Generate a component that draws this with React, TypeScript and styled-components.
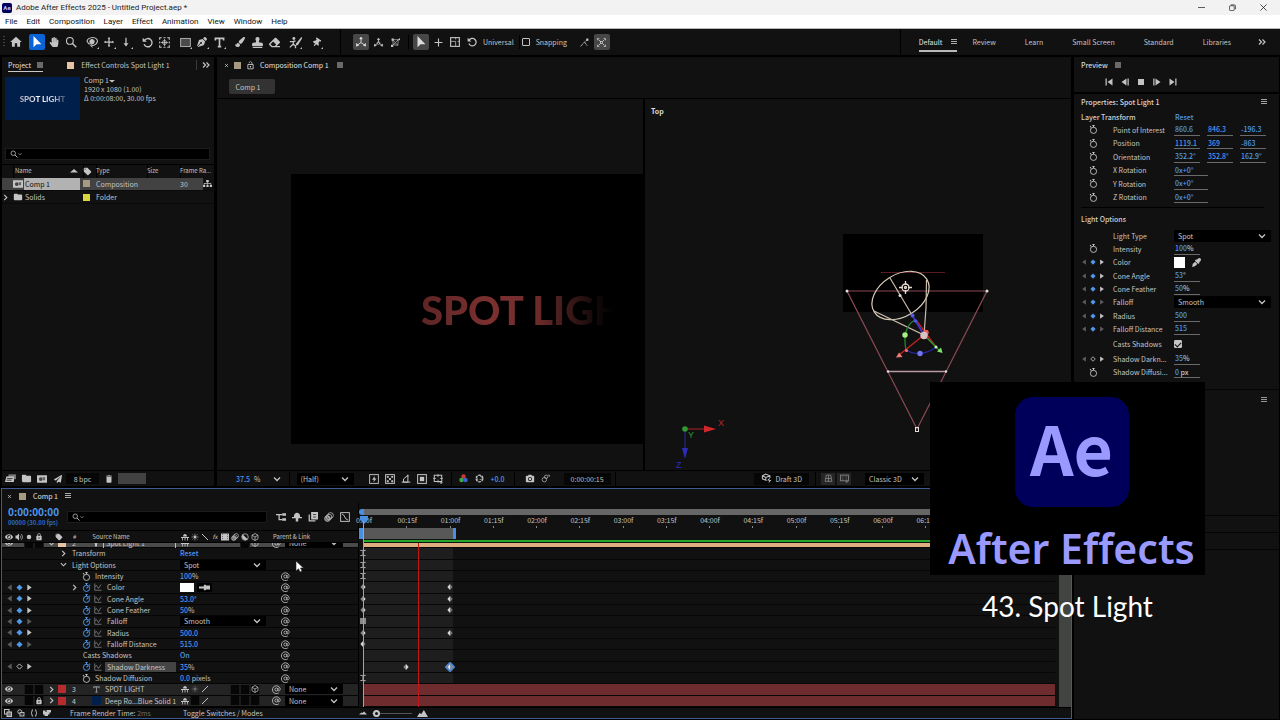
import React from "react";
import styled, { createGlobalStyle, css } from "styled-components";
import { FaHandPaper, FaStamp, FaEraser, FaPenNib, FaPaintBrush, FaThumbtack, FaEyeDropper, FaEye, FaSitemap, FaPaperPlane } from "react-icons/fa";
import { MdHome, MdLocalOffer, MdFolder, MdLock, MdLockOpen, MdDelete, MdPhotoCamera } from "react-icons/md";

const ui = '"Noto Sans CJK SC", "Noto Sans", sans-serif';
const c = {
  panel: "#111111",
  text: "#c4c4c4",
  dim: "#6f6f6f",
  blue: "#4f98ec",
  deepBlue: "#2d6bc0",
  edge: "#3d5a91",
  sand: "#a89a80",
  peach: "#e5c3a3",
  red: "#b52b2e",
};

const GlobalStyle = createGlobalStyle`
  * { box-sizing: border-box; }
  body { margin: 0; background: #000; }
  button, input, select { font: inherit; color: inherit; margin: 0; padding: 0; border: 0; background: none; }
  button { display: flex; align-items: center; justify-content: center; }
  svg { display: block; flex: none; }
`;

const Page = styled.div`
  position: relative;
  display: flex;
  flex-direction: column;
  min-height: 100vh;
  overflow: hidden;
  background: #000;
  color: ${c.text};
  font-family: ${ui};
  font-size: 7px;
  line-height: 10px;
  white-space: nowrap;
`;

/* ---------- icons ---------- */

const glyphs: Record<string, React.ReactNode> = {
  arrow: <path d="M4 1v13l3.6-3.3H13z" fill="currentColor" stroke="none" />,
  search: <><circle cx="6.500" cy="6.500" r="4.500" strokeWidth="1.500" /><path d="M10 10l5 5" strokeWidth="1.800" /></>,
  orbit: <><path d="M2 8c-2-3 3-6 7-6s7 3 6 6-5 5-8 5M2 8c1 2 2 3 4 3" strokeWidth="1.500" /><circle cx="8" cy="7.500" r="3" fill="currentColor" /><path d="M9 10l-3 3 3 2" /></>,
  pan: <><path d="M8 1v14M1 8h14" strokeWidth="2" /><path d="M8 0l2 3H6zM8 16l2-3H6zM0 8l3-2v4zM16 8l-3-2v4z" fill="currentColor" stroke="none" /></>,
  plus: <path d="M8 1v14M1 8h14" strokeWidth="2" />,
  dolly: <><path d="M8 1v12" strokeWidth="2" /><path d="M4 10l4 5 4-5z" fill="currentColor" stroke="none" /></>,
  rotate: <><path d="M3.500 5A6 6 0 1 1 3 10.500" strokeWidth="2" /><path d="M1 1v6h6z" fill="currentColor" stroke="none" /></>,
  anchor: <><path d="M1 4V1h3M12 1h3v3M15 12v3h-3M4 15H1v-3M6.500 1h3M6.500 15h3M1 6.500v3M15 6.500v3" strokeWidth="1.600" /><circle cx="8" cy="8" r="3" /><path d="M8 3v10M3 8h10" /></>,
  rect: <rect x="1" y="2" width="14" height="12" fill="#4a4a4a" />,
  type: <path d="M2 5V2h12v3M8 2v12M5.500 14h5" strokeWidth="2.400" />,
  roto: <><circle cx="6" cy="3" r="1.800" fill="currentColor" stroke="none" /><path d="M1 7h4l3-1M6 6l-1 4-4 4M5 10l3 2v3" strokeWidth="1.600" /><path d="M15.500 1L9 9l-1 3 3-1 5-8z" fill="currentColor" stroke="none" /></>,
  axis: <><path d="M8 9V2M8 9l-6 4M8 9l6 4" strokeWidth="1.500" /><path d="M8 0l2 3H6zM0 14.500l1-4 3 3zM16 14.500l-1-4-3 3z" fill="currentColor" /></>,
  axisWorld: <><path d="M8 8V2M8 8l-6 5M8 8l6 5" strokeWidth="1.500" /><path d="M8 0l2 3H6zM0 14.500l1-4 3 3zM16 14.500l-1-4-3 3z" fill="currentColor" /><circle cx="8" cy="9" r="2.500" /></>,
  axisView: <><path d="M3 3h10l-1 10-8-1zM3 3l9 10M13 3L2 14" /><path d="M1 1h4v4H1zM0 12h4v4H0z" fill="currentColor" stroke="none" /><path d="M12 3l4-3v4z" fill="currentColor" stroke="none" /></>,
  scaleBox: <><rect x="1" y="1" width="14" height="14" strokeWidth="1.800" /><path d="M1 7h8v8M9 1v3M12 7h3" /></>,
  snapLine: <><path d="M1 15l7-8 5-4M8 7l5 7" strokeWidth="1.500" strokeDasharray="6 1" /><rect x="11" y="1" width="4" height="4" fill="currentColor" stroke="none" /></>,
  snapBox: <><path d="M1 4V1h3M12 1h3v3M15 12v3h-3M4 15H1v-3M3 3l3 3M13 3l-3 3M3 13l3-3M13 13l-3-3" strokeWidth="1.400" /><rect x="6" y="6" width="4" height="4" /></>,
  menu: <path d="M0 1.333h16M0 6.667h16M0 12h16" strokeWidth="2" />,
  block: <rect x="0" y="0" width="16" height="16" fill="#6a6a6a" stroke="none" />,
  more: <path d="M2 3l5 5-5 5M9 3l5 5-5 5" strokeWidth="2.400" />,
  chevron: <path d="M2 5l6 6 6-6" strokeWidth="2.600" />,
  twirl: <path d="M5 2l6 6-6 6" strokeWidth="2.600" />,
  close: <path d="M3 3l10 10M13 3L3 13" strokeWidth="2" />,
  watch: <><circle cx="8" cy="9.500" r="5.500" strokeWidth="1.600" /><path d="M6 1h4M8 1v3M2 2l2 2.500" strokeWidth="1.800" /></>,
  watchOn: <><circle cx="8" cy="9.500" r="5.500" strokeWidth="1.700" /><path d="M6 1h4M8 1v3M8 9.500l3-3M13 3l1.500 2" strokeWidth="1.800" /></>,
  graph: <><path d="M1.500 1v13.500H15" strokeWidth="1.500" /><path d="M2 7l3-2 4 6 5-8" strokeWidth="1.500" /></>,
  spiral: <><path d="M12 14A7 7 0 1 1 14.500 6.500c.3 2.500-1 4-2.500 4-1.200 0-1.800-1-1.500-2.500L11 5" strokeWidth="1.500" /><circle cx="7.800" cy="8" r="2.700" strokeWidth="1.500" /></>,
  prev: <path d="M13 1v14L3 8z" fill="currentColor" stroke="none" />,
  next: <path d="M3 1v14l10-7z" fill="currentColor" stroke="none" />,
  key: <path d="M8 1l7 7-7 7-7-7z" fill="currentColor" stroke="none" />,
  keyOff: <path d="M8 2l6 6-6 6-6-6z" strokeWidth="2.200" />,
  first: <path d="M1 1h2.500v14H1zM15 1v14L5 8z" fill="currentColor" stroke="none" />,
  last: <path d="M15 1h-2.500v14H15zM1 1v14l10-7z" fill="currentColor" stroke="none" />,
  stepBack: <path d="M13 1h2.500v14H13zM11 1v14L1 8z" fill="currentColor" stroke="none" />,
  stepFwd: <path d="M3 1H.5v14H3zM5 1v14l10-7z" fill="currentColor" stroke="none" />,
  stop: <rect x="2" y="2" width="12" height="12" fill="currentColor" stroke="none" />,
  speaker: <><path d="M1 5h3l4-4v14l-4-4H1z" fill="currentColor" stroke="none" /><path d="M10 5c2 2 2 4 0 6M12 2c4 4 4 8 0 12" strokeWidth="1.500" /></>,
  dot: <circle cx="8" cy="8" r="4.500" fill="currentColor" stroke="none" />,
  shy: <><path d="M4 7c0-7 8-7 8 0zM0 8h16v2H0z" fill="currentColor" stroke="none" /><path d="M3 10v5M8 8v7M13 10v5" strokeWidth="1.600" /></>,
  shyMan: <><path d="M3 8c0-9 10-9 10 0z" fill="currentColor" stroke="none" /><path d="M0 8h16v2H0zM6 10h4v5H6z" fill="currentColor" stroke="none" /></>,
  sun: <><circle cx="8" cy="8" r="2.500" fill="currentColor" /><path d="M8 1v3M8 12v3M1 8h3M12 8h3M3 3l2 2M11 11l2 2M13 3l-2 2M3 13l2-2" /></>,
  slash: <path d="M2 2l12 12" strokeWidth="2" />,
  pencil: <path d="M2 14L14 2" strokeWidth="2" />,
  frames: <><rect x="0" y="1" width="16" height="14" fill="currentColor" stroke="none" /><path d="M3 2v12M13 2v12" stroke="#333" strokeDasharray="2 2" /></>,
  blur: <><circle cx="10.500" cy="5.500" r="4.500" /><circle cx="8" cy="8" r="4.500" /><circle cx="5.500" cy="10.500" r="4.500" fill="currentColor" fillOpacity=".5" /></>,
  half: <><circle cx="8" cy="8" r="6.500" strokeWidth="1.500" /><path d="M3.500 3.500a6.500 6.500 0 0 0 9 9z" fill="currentColor" /></>,
  cube: <path d="M8 1l6 3.500v7L8 15l-6-3.500v-7zM2 4.500L8 8l6-3.500M8 8v7" strokeWidth="1.500" />,
  draft: <><path d="M8 11l-6-2.500V4l5-2.500L13 4v3M2 4l5 2.500L13 4M7 6.500V11" strokeWidth="1.500" /><path d="M13 6l-4 5h3l-1 4 4-5h-3z" fill="currentColor" stroke="none" /></>,
  flow: <><path d="M0 4h10M5 4v8h5" strokeWidth="2" /><path d="M10 2h6v4h-6zM10 10h6v4h-6z" fill="currentColor" stroke="none" /></>,
  stack: <><rect x="5" y="0" width="11" height="12" fill="currentColor" stroke="none" /><path d="M2 4v10h10" strokeWidth="2" /><path d="M8 4h5M8 8h5" stroke="#222" /></>,
  graphBox: <><rect x="1" y="1" width="14" height="14" strokeWidth="1.500" /><path d="M3 3c5 1 4 9 10 10" strokeWidth="1.500" /></>,
  interpret: <><rect x="5" y="2" width="11" height="7" fill="#777" stroke="none" /><path d="M2 5h11v8H0l2-8z" fill="currentColor" stroke="none" /><path d="M3 8h8M2.500 10.500h7" stroke="#222" /></>,
  newComp: <><rect x="0" y="2" width="16" height="12" fill="currentColor" stroke="none" /><circle cx="6" cy="8" r="3" fill="#444" stroke="none" /><rect x="9" y="5" width="4" height="5" fill="#666" stroke="none" /></>,
  fast: <><rect x="1" y="1" width="14" height="14" strokeWidth="1.500" /><path d="M9 3l-4 6h3l-1 4 5-6H9z" fill="currentColor" stroke="none" /></>,
  grid: <><rect x="1" y="1" width="14" height="14" strokeWidth="1.600" /><path d="M3 3h3v3H3zM10 3h3v3h-3zM6.500 6.500h3v3h-3zM3 10h3v3H3zM10 10h3v3h-3z" fill="currentColor" stroke="none" /></>,
  mask: <path d="M4 13V8l7-6v11zM1 13h14M11 1v3" strokeWidth="1.600" />,
  region: <><rect x="1" y="1" width="14" height="14" strokeWidth="1.600" /><rect x="4.500" y="4.500" width="7" height="7" fill="currentColor" stroke="none" /></>,
  guides: <><rect x="2" y="2" width="12" height="10" strokeWidth="1.600" /><path d="M8 0v5M8 9v5M0 7h5M11 7h5" /><path d="M10 13h6l-3 3z" fill="currentColor" stroke="none" /></>,
  viewer: <><rect x="1" y="2" width="14" height="10" strokeWidth="1.600" /><path d="M5 4v6M11 4v6" strokeDasharray="2 2" strokeWidth="1.500" /><path d="M9 13h6l-3 3z" fill="currentColor" stroke="none" /></>,
  channels: <><circle cx="8" cy="4.500" r="4" fill="#c43a3a" stroke="none" /><circle cx="4.500" cy="10.500" r="4" fill="#3aa845" stroke="none" /><circle cx="11.500" cy="10.500" r="4" fill="#3f62d0" stroke="none" /></>,
  aperture: <><circle cx="8" cy="8" r="6" strokeWidth="2.200" strokeDasharray="5 1.300" /><path d="M8 2l4 5M14 9l-6 1M3 5l2 6" /></>,
  ghost: <><circle cx="6" cy="10" r="4" /><circle cx="9" cy="5" r="3" /><path d="M12 2h3v3" /></>,
  ground: <path d="M4 2h8l2 11H2zM3 8h10M8 2v11" strokeWidth="1.500" />,
  toggleA: <><rect x="1" y="1" width="9" height="9" strokeWidth="2" /><rect x="6" y="6" width="9" height="9" fill="#777" strokeWidth="2" /></>,
  toggleB: <><circle cx="5.500" cy="5.500" r="4" strokeWidth="1.800" /><rect x="6" y="7" width="8" height="7" fill="#333" strokeWidth="1.800" /></>,
  braces: <path d="M6 1C3 1 5 7 2 8c3 1 1 7 4 7M10 1c3 0 1 6 4 7-3 1-1 7-4 7" strokeWidth="2" />,
  render: <path d="M0 3h5v3h2V2h9v5h-3v4h-3v3H3v-3H0z" fill="currentColor" stroke="none" />,
  dropper: <><path d="M0 8h8" strokeWidth="3" /><path d="M7 4h3v8H7zM10 5h6v6h-6z" fill="currentColor" stroke="none" /></>,
  hills: <path d="M0 13l4-6 2 2 4-6 6 10z" fill="currentColor" stroke="none" />,
  hill: <path d="M0 11l5-4 2 1 3-3 6 6z" fill="currentColor" stroke="none" />,
  sort: <path d="M0 11l8-7 8 7z" fill="currentColor" stroke="none" />,
  caret: <path d="M0 5h16l-8 7z" fill="currentColor" stroke="none" />,
  bulb: <><circle cx="8" cy="6" r="4" fill="currentColor" stroke="none" /><path d="M8 10v5" strokeWidth="4" /></>,
  min: <path d="M0 8h16" strokeWidth="1.600" />,
  restore: <><rect x="1" y="4" width="11" height="11" rx="2" strokeWidth="1.600" /><path d="M4 2h8c2 0 3 1 3 3v7" strokeWidth="1.600" /></>,
  x: <path d="M1 1l14 14M15 1L1 15" strokeWidth="1.800" />,
  ibeam: <path d="M2 2h5l1 1 1-1h5M2 14h5l1-1 1 1h5M8 3v10" strokeWidth="2.200" />,
  hold: <rect x="1" y="1" width="14" height="14" fill="#8a8a8a" stroke="none" />,
  kf: <><path d="M8 0l7 8-7 8z" fill="#777" stroke="none" /><path d="M8 0L1 8l7 8z" fill="#d8d8d8" stroke="none" /></>,
  kfR: <><path d="M8 0l7 8-7 8z" fill="#d8d8d8" stroke="none" /><path d="M8 0L1 8l7 8z" fill="#8a8a8a" stroke="none" /></>,
  ring: <><path d="M8 1.500l6.500 6.500L8 14.500 1.500 8z" fill="#7d8fa8" stroke="#4a86cf" strokeWidth="2" strokeLinejoin="round" /><path d="M8 4L5 8l3 4z" fill="#eee" stroke="none" /></>,
};

function Icon({ name, size = 9, color }: { name: string; size?: number; color?: string }) {
  return (
    <svg width={size} height={size} viewBox="0 0 16 16" fill="none" stroke="currentColor" strokeWidth="1.200" color={color} aria-hidden="true">
      {glyphs[name]}
    </svg>
  );
}

/* ---------- shared controls ---------- */

const Spacer = styled.div`flex: 1;`;

const Swatch = styled.i<{ $color: string; $size?: number }>`
  display: block;
  flex: none;
  width: ${(p) => p.$size ?? 7}px;
  height: ${(p) => p.$size ?? 7}px;
  background: ${(p) => p.$color};
`;

const SelectBox = styled.label<{ $width: number; $height?: number }>`
  position: relative;
  flex: none;
  display: flex;
  align-items: center;
  width: ${(p) => p.$width}px;
  height: ${(p) => p.$height ?? 10}px;
  background: #000;
  border-radius: 1px;
  select {
    appearance: none;
    width: 100%;
    height: 100%;
    padding-left: 4px;
    outline: none;
  }
  svg { position: absolute; right: 5px; pointer-events: none; }
`;

function Select({ label, value, width, height }: { label: string; value: string; width: number; height?: number }) {
  return (
    <SelectBox $width={width} $height={height}>
      <select aria-label={label} defaultValue={value}>
        <option>{value}</option>
      </select>
      <Icon name="chevron" size={8} />
    </SelectBox>
  );
}

const SearchBox = styled.label`
  display: flex;
  align-items: center;
  flex: 1;
  height: 12px;
  padding-left: 4px;
  background: #000;
  border: 1px solid #1c1c1c;
  input { flex: 1; min-width: 0; outline: none; }
`;

function Search({ label }: { label: string }) {
  return (
    <SearchBox>
      <Icon name="search" size={8} />
      <Icon name="chevron" size={4} />
      <input type="search" aria-label={label} />
    </SearchBox>
  );
}

const Value = styled.button`
  color: ${c.blue};
  font-weight: 500;
`;
const Unit = styled.span`color: ${c.text};`;

const Check = styled.input`
  appearance: none;
  width: 8px;
  height: 8px;
  border: 1px solid ${c.text};
  border-radius: 1px;
  &:checked { background: ${c.text}; }
  &:checked::after {
    content: "";
    display: block;
    width: 3px;
    height: 5px;
    margin-left: 1px;
    border: solid #111;
    border-width: 0 1px 1px 0;
    transform: rotate(45deg);
  }
`;

/* ---------- window chrome ---------- */

const TitleBar = styled.header`
  display: flex;
  align-items: center;
  gap: 4px;
  height: 15px;
  padding: 0 13px 0 2px;
  background: #f2f2f2;
  color: #1b1b1b;
  font-family: Roboto, sans-serif;
  font-size: 8px;
`;
const AppBadge = styled.span`
  width: 10px;
  height: 10px;
  border-radius: 2px;
  background: #00005b;
  color: #c9c4ff;
  font-weight: 700;
  font-size: 6px;
  text-align: center;
`;
const WindowButtons = styled.div`
  display: flex;
  margin-left: auto;
  gap: 24px;
`;
const MenuBar = styled.nav`
  display: flex;
  align-items: center;
  gap: 9px;
  height: 14px;
  padding-left: 5px;
  background: #fff;
  border-bottom: 1px solid #b8b8b8;
  color: #111;
  font-family: Roboto, sans-serif;
  font-size: 8px;
`;

/* ---------- toolbar ---------- */

const ToolBar = styled.div`
  display: flex;
  align-items: center;
  height: 26px;
  padding-left: 3px;
  background: ${c.panel};
`;
const Grip = styled.span`
  width: 2px;
  height: 12px;
  margin-right: 3px;
  background: repeating-linear-gradient(#444 0 1px, transparent 1px 3px);
`;
const ToolGroup = styled.div`
  display: flex;
  align-items: center;
  gap: 1px;
  margin-right: 5px;
`;
const Tool = styled.button<{ $tone?: "active" | "on" }>`
  position: relative;
  width: 16px;
  height: 16px;
  border-radius: 2px;
  ${(p) => p.$tone === "active" && css`background: #0b63d8; color: #fff;`}
  ${(p) => p.$tone === "on" && css`background: #474747; color: #ddd;`}
`;
const Corner = styled.i`
  position: absolute;
  right: 1px;
  bottom: 1px;
  border: solid transparent;
  border-width: 1px;
  border-right-color: ${c.text};
  border-bottom-color: ${c.text};
`;
const Divider = styled.span<{ $tall?: boolean }>`
  width: 1px;
  height: ${(p) => (p.$tall ? 26 : 14)}px;
  background: #000;
`;
const Pad = styled.div<{ $w: number }>`width: ${(p) => p.$w}px;`;
const ToolText = styled.span`padding-left: 2px;`;
const SnapLabel = styled.label`
  display: flex;
  align-items: center;
  gap: 6px;
  margin: 0 10px 0 2px;
`;
const Workspaces = styled.nav`
  display: flex;
  align-items: center;
  gap: 29px;
  padding: 1px 27px 0 18px;
`;
const Workspace = styled.button<{ $on?: boolean }>`
  gap: 9px;
  height: 18px;
  border-bottom: 2px solid ${(p) => (p.$on ? "#b8b8b8" : "transparent")};
  ${(p) => p.$on && css`color: #e2e2e2; margin-right: -14px;`}
`;
const MoreSpaces = styled.button`margin-right: 14px;`;

type ToolDef = [string, React.ReactNode, boolean?];
const toolGroups: ToolDef[][] = [
  [["Home", <MdHome size={14} />]],
  [["Selection", <Icon name="arrow" size={14} />], ["Hand", <FaHandPaper size={10} />], ["Zoom", <Icon name="search" size={12} />]],
  [["Orbit", <Icon name="orbit" size={12} />, true], ["Pan", <Icon name="pan" size={10} />, true], ["Dolly", <Icon name="dolly" size={10} />, true]],
  [["Rotate", <Icon name="rotate" size={11} />], ["Anchor point", <Icon name="anchor" size={11} />]],
  [["Rectangle", <Icon name="rect" size={11} />, true], ["Pen", <FaPenNib size={10} />, true], ["Type", <Icon name="type" size={11} />, true]],
  [["Brush", <FaPaintBrush size={10} />], ["Clone stamp", <FaStamp size={11} />], ["Eraser", <FaEraser size={11} />]],
  [["Roto brush", <Icon name="roto" size={13} />, true]],
  [["Puppet pin", <FaThumbtack size={9} transform="rotate(35)" />, true]],
];

function Toolbar() {
  return (
    <ToolBar>
      <Grip />
      {toolGroups.map((g, i) => (
        <ToolGroup key={i}>
          {g.map(([name, icon, more]) => (
            <Tool key={name} aria-label={name} $tone={name === "Selection" ? "active" : undefined}>
              {icon}
              {more && <Corner />}
            </Tool>
          ))}
        </ToolGroup>
      ))}
      <Pad $w={11} />
      <Divider $tall />
      <Pad $w={12} />
      <ToolGroup>
        <Tool aria-label="Local axis" $tone="on"><Icon name="axis" size={10} /></Tool>
        <Tool aria-label="World axis"><Icon name="axisWorld" size={9} /></Tool>
        <Tool aria-label="View axis"><Icon name="axisView" size={9} /></Tool>
      </ToolGroup>
      <Divider />
      <Pad $w={4} />
      <ToolGroup>
        <Tool aria-label="Universal gizmo" $tone="on"><Icon name="arrow" size={14} /></Tool>
        <Tool aria-label="Move"><Icon name="plus" size={9} /></Tool>
        <Tool aria-label="Scale"><Icon name="scaleBox" size={10} /></Tool>
        <Tool aria-label="Spin"><Icon name="rotate" size={10} /></Tool>
        <ToolText>Universal</ToolText>
      </ToolGroup>
      <Divider />
      <SnapLabel>
        <Check type="checkbox" />
        Snapping
      </SnapLabel>
      <ToolGroup>
        <Tool aria-label="Snap edges"><Icon name="snapLine" size={9} /></Tool>
        <Tool aria-label="Snap features" $tone="on"><Icon name="snapBox" size={9} /></Tool>
      </ToolGroup>
      <Spacer />
      <Divider $tall />
      <Workspaces>
        <Workspace $on>Default<Icon name="menu" size={6} /></Workspace>
        {["Review", "Learn", "Small Screen", "Standard", "Libraries"].map((w) => (
          <Workspace key={w}>{w}</Workspace>
        ))}
      </Workspaces>
      <MoreSpaces aria-label="More workspaces"><Icon name="more" size={8} /></MoreSpaces>
    </ToolBar>
  );
}

/* ---------- layout ---------- */

const Body = styled.main`
  flex: 1;
  display: flex;
  gap: 2px;
  padding: 2px 1px 1px;
`;
const Main = styled.div`
  flex: 1;
  min-width: 0;
  display: flex;
  flex-direction: column;
`;
const Upper = styled.div`
  flex: 1;
  display: flex;
  gap: 3px;
  padding: 0 1px 2px;
`;
const Panel = styled.section`
  display: flex;
  flex-direction: column;
  background: ${c.panel};
`;
const TabRow = styled.div`
  display: flex;
  align-items: center;
  height: 16px;
`;
const BottomBar = styled.div`
  display: flex;
  align-items: center;
  height: 16px;
  border-top: 1px solid #000;
`;

/* ---------- project panel ---------- */

const Project = styled(Panel)`width: 212px;`;
const ProjectTab = styled.button`
  gap: 6px;
  height: 14px;
  margin: 0 24px 0 6px;
  border-bottom: 1px solid #c8c8c8;
  color: #e2e2e2;
`;
const EffectsTab = styled.button`gap: 7px;`;
const TabEnd = styled.span`
  margin-left: auto;
  padding: 1px 4px 1px 5px;
  border-left: 1px solid #3a3a3a;
`;
const Info = styled.div`
  display: flex;
  gap: 4px;
  height: 75px;
  padding: 3px 3px 0;
  line-height: 9px;
`;
const Thumb = styled.div`
  display: flex;
  align-items: center;
  justify-content: center;
  width: 75px;
  height: 43px;
  margin-top: 1px;
  background: #001f4a;
  font: 900 8px/10px Lato, sans-serif;
  span {
    background: linear-gradient(90deg, #aab 0, #fff 45%, #ccd 75%, #456 100%);
    background-clip: text;
    color: transparent;
  }
`;
const InfoName = styled.div`
  display: flex;
  align-items: center;
`;
const SearchRow = styled.div`
  display: flex;
  padding: 0 4px 4px 3px;
`;
const Items = styled.table`
  width: 100%;
  table-layout: fixed;
  border-collapse: collapse;
  th, td { height: 13px; padding: 0; font-weight: 400; text-align: left; }
  th { border-top: 1px solid #000; font-size: 6px; }
  th + th { box-shadow: inset 1px 0 #000; }
  th:nth-child(2) { padding-left: 2px; }
  th > div, td > div { display: flex; align-items: center; }
`;
const ItemRow = styled.tr<{ $selected?: boolean }>`
  border-bottom: 1px solid #0a0a0a;
  ${(p) => p.$selected && css`
    td { background: #424242; }
    td:last-child { background: none; }
  `}
`;
const ItemName = styled.div<{ $selected?: boolean }>`
  gap: 1px;
  svg { width: 10px; height: 10px; }
  span { width: 56px; line-height: 12px; padding-left: 1px; }
  ${(p) => p.$selected && css`span { background: #b2b2b2; color: #111; }`}
`;
const HeadName = styled.div`
  justify-content: space-between;
  padding-right: 5px;
`;
const Bpc = styled.button`
  width: 33px;
  height: 11px;
  margin-right: 5px;
  background: #060606;
`;
const ScrollThumb = styled.span`
  width: 28px;
  height: 11px;
  margin-left: 4px;
  background: #424242;
`;
const IconButton = styled.button<{ $on?: boolean }>`
  width: 16px;
  height: 12px;
  ${(p) => p.$on && css`background: #262626; color: #858585; width: 14px; margin-right: 2px;`}
`;

function ProjectPanel() {
  return (
    <Project>
      <TabRow>
        <ProjectTab>Project<Icon name="block" size={6} /></ProjectTab>
        <EffectsTab><Swatch $color={c.peach} />Effect Controls Spot Light 1</EffectsTab>
        <TabEnd><Icon name="more" size={8} /></TabEnd>
      </TabRow>
      <Info>
        <Thumb><span>SPOT LIGHT</span></Thumb>
        <div>
          <InfoName>Comp 1<Icon name="caret" size={6} /></InfoName>
          <div>1920 x 1080 (1.00)</div>
          <div>Δ 0:00:08:00, 30.00 fps</div>
        </div>
      </Info>
      <SearchRow><Search label="Search project" /></SearchRow>
      <Items>
        <colgroup>
          <col width="11" /><col width="70" /><col width="13" /><col width="51" /><col width="33" /><col width="23" /><col width="11" />
        </colgroup>
        <thead>
          <tr>
            <th />
            <th><HeadName>Name<Icon name="sort" size={8} /></HeadName></th>
            <th><MdLocalOffer size={9} /></th>
            <th>Type</th>
            <th>Size</th>
            <th colSpan={2}>Frame Ra...</th>
          </tr>
        </thead>
        <tbody>
          <ItemRow $selected>
            <td />
            <td><ItemName $selected><Icon name="newComp" /><span>Comp 1</span></ItemName></td>
            <td><Swatch $color={c.sand} /></td>
            <td>Composition</td>
            <td />
            <td>30</td>
            <td><FaSitemap size={9} /></td>
          </ItemRow>
          <ItemRow>
            <td><Icon name="twirl" size={7} /></td>
            <td><ItemName><MdFolder /><span>Solids</span></ItemName></td>
            <td><Swatch $color="#d9d53c" /></td>
            <td>Folder</td>
            <td /><td /><td />
          </ItemRow>
        </tbody>
      </Items>
      <Spacer />
      <BottomBar>
        <IconButton aria-label="Interpret footage"><Icon name="interpret" size={11} /></IconButton>
        <IconButton aria-label="New folder"><MdFolder size={11} /></IconButton>
        <IconButton aria-label="New composition"><Icon name="newComp" size={10} /></IconButton>
        <IconButton aria-label="Project settings"><FaPaperPlane size={8} /></IconButton>
        <Bpc>8 bpc</Bpc>
        <MdDelete size={10} />
        <ScrollThumb />
      </BottomBar>
    </Project>
  );
}

/* ---------- composition panel ---------- */

const Composition = styled(Panel)`
  flex: 1;
  min-width: 0;
`;
const CompTab = styled.button`
  gap: 5px;
  padding: 0 8px 0 7px;
  color: #e2e2e2;
`;
const Crumbs = styled.div`
  height: 26px;
  padding: 6px 12px 0;
  border-bottom: 1px solid #000;
`;
const Crumb = styled.button`
  width: 46px;
  height: 15px;
  padding-right: 8px;
  border-radius: 2px;
  background: #333;
`;
const Views = styled.div`
  flex: 1;
  display: flex;
`;
const View = styled.div`
  flex: 1;
  min-width: 0;
  & + & { border-left: 2px solid #000; }
`;
const Canvas = styled.div`
  display: flex;
  align-items: center;
  height: 270px;
  margin: 75px 0 0 74px;
  padding: 2px 0 0 130px;
  background: #000;
  overflow: hidden;
`;
const SpotText = styled.span`
  font: 900 40px/48px Lato, sans-serif;
  background: linear-gradient(90deg, #5e2525 0, #7c3030 70px, #702b2b 115px, #3c1919 148px, #140909 174px, #000 194px);
  background-clip: text;
  color: transparent;
`;
const ViewName = styled.div`
  padding: 7px 6px 0;
  height: 18px;
  font-weight: 700;
  color: #ddd;
`;
const Zoom = styled.div`
  display: flex;
  align-items: center;
  gap: 4px;
  padding: 0 12px 0 19px;
`;
const Boxed = styled.button`
  gap: 4px;
  height: 12px;
  padding: 0 7px;
  background: #060606;
`;
const ViewOptions = styled.div`
  display: flex;
  align-items: center;
  margin-left: auto;
  padding-right: 147px;
`;

function TopView() {
  return (
    <svg width="426" height="352" viewBox="645 117 426 352" fill="none">
      <rect x="843" y="234" width="140" height="78" fill="#000" />
      <path d="M881 272.500h64" stroke="#5a1c20" />
      <path d="M847 291h140L917 429z" stroke="#8b4a55" strokeWidth="1.200" />
      <path d="M888 371.500h58" stroke="#b99aa2" strokeWidth="1.300" />
      <g fill="#ddd"><circle cx="847" cy="291" r="1.500" /><circle cx="987" cy="291" r="1.500" /><circle cx="888" cy="371.500" r="1.200" /><circle cx="946" cy="371.500" r="1.200" /></g>
      <rect x="915.500" y="427.500" width="3" height="4" stroke="#ddd" />
      <ellipse cx="900.500" cy="295.500" rx="31" ry="21" transform="rotate(-32 900.500 295.500)" stroke="#d9cbb8" strokeWidth="1.200" />
      <path d="M874 311l50 24 2-27 .5-28M890 278l22 37" stroke="#c9bcab" strokeWidth="1.200" />
      <circle cx="900" cy="295.500" r="1.500" fill="#ddd" />
      <g stroke="#e4dcd2" strokeWidth="1.300"><circle cx="905.500" cy="287.500" r="3.500" /><circle cx="905.500" cy="287.500" r="1" /><path d="M905.500 281v4M905.500 290v4M899 287.500h4M908 287.500h4" /></g>
      <path d="M915 320c-9 5-12 14-9 30" stroke="#1d8a26" strokeWidth="1.300" />
      <path d="M906 350c8 5 20 5 30-3" stroke="#2427a8" strokeWidth="1.300" />
      <path d="M924 335l-25 20M916 320l20 27" stroke="#c42222" strokeWidth="1.300" />
      <path d="M924 335l-12-20" stroke="#3a3ad0" strokeWidth="1.600" />
      <path d="M924 335l15 15" stroke="#27a12f" strokeWidth="1.300" />
      <circle cx="912.500" cy="315.500" r="2" fill="#5656e0" /><circle cx="915.500" cy="321" r="1.700" fill="#5656e0" />
      <circle cx="905" cy="335" r="2.700" fill="#a5ef86" /><circle cx="920" cy="353.500" r="2.700" fill="#7276f0" />
      <circle cx="906.500" cy="350.500" r="1.500" fill="#f07a7a" /><circle cx="936" cy="347" r="1.500" fill="#c8f5b8" />
      <path d="M896 357.500l3-5 3.500 4.500z" fill="#f07a7a" />
      <path d="M942.500 353l-5.500-1.500 4-4z" fill="#86e46a" />
      <circle cx="926" cy="332.500" r="2.700" fill="#f05a50" /><circle cx="924" cy="335.500" r="3.700" fill="#d9c1c4" />
      <path d="M685 429h22" stroke="#8c1f22" strokeWidth="1.300" />
      <path d="M704 425.500l12 3.500-12 3.500z" fill="#d0282c" />
      <path d="M685 429v20" stroke="#252578" strokeWidth="1.300" />
      <path d="M682 448h6l-3 11z" fill="#2c2cb8" />
      <circle cx="685" cy="429" r="2.800" fill="#2f9a33" />
      <g fontFamily="Liberation Sans, Arial, sans-serif" fontSize="9">
        <text x="718" y="426" fill="#b3272b">X</text>
        <text x="688" y="438" fill="#2f9a33">Y</text>
        <text x="676" y="468" fill="#2c2cb8">Z</text>
      </g>
    </svg>
  );
}

function CompositionPanel() {
  return (
    <Composition>
      <TabRow>
        <CompTab>
          <Icon name="close" size={5} />
          <Swatch $color={c.sand} />
          <MdLockOpen size={9} />
          Composition Comp 1
        </CompTab>
        <Icon name="block" size={6} />
      </TabRow>
      <Crumbs><Crumb>Comp 1</Crumb></Crumbs>
      <Views>
        <View><Canvas><SpotText>SPOT LIGHT</SpotText></Canvas></View>
        <View><ViewName>Top</ViewName><TopView /></View>
      </Views>
      <BottomBar>
        <Zoom><Value>37.5</Value>%</Zoom>
        <Icon name="chevron" size={8} />
        <Pad $w={8} /><Divider /><Pad $w={7} />
        <Select label="Resolution" value="(Half)" width={57} height={12} />
        <Pad $w={12} />
        {["fast", "grid", "mask", "region", "guides"].map((n) => (
          <IconButton key={n} aria-label={n}><Icon name={n} size={10} /></IconButton>
        ))}
        <Pad $w={5} /><Divider /><Pad $w={4} />
        <IconButton aria-label="Channels"><Icon name="channels" size={9} /></IconButton>
        <IconButton aria-label="Exposure reset"><Icon name="aperture" size={9} /></IconButton>
        <Pad $w={3} />
        <Value>+0.0</Value>
        <Pad $w={9} /><Divider /><Pad $w={7} />
        <IconButton aria-label="Snapshot"><MdPhotoCamera size={10} /></IconButton>
        <IconButton aria-label="Show snapshot"><Icon name="ghost" size={9} /></IconButton>
        <Pad $w={10} />
        <Boxed>0:00:00:15</Boxed>
        <Pad $w={4} /><Divider />
        <ViewOptions>
          <Boxed><Icon name="draft" size={11} />Draft 3D</Boxed>
          <Pad $w={6} /><Divider /><Pad $w={5} />
          <IconButton $on aria-label="Ground plane"><Icon name="ground" size={9} /></IconButton>
          <IconButton $on aria-label="Extended viewer"><Icon name="viewer" size={9} /></IconButton>
          <Pad $w={12} />
          <Select label="Renderer" value="Classic 3D" width={59} height={12} />
        </ViewOptions>
      </BottomBar>
    </Composition>
  );
}

/* ---------- timeline ---------- */

const TimelinePanel = styled.section`
  border: 1px solid ${c.edge};
  background: ${c.panel};
`;
const TimelineTab = styled.div`
  display: flex;
  align-items: center;
  gap: 7px;
  height: 14px;
  padding-left: 5px;
  color: #e2e2e2;
`;
const Columns = styled.div`
  display: grid;
  grid-template-columns: 357px 1fr;
`;
const HeadLeft = styled.div`border-right: 1px solid #000;`;
const HeadTools = styled.div`
  display: flex;
  align-items: center;
  height: 27px;
  padding: 0 5px 0 6px;
`;
const Timecode = styled.div`
  width: 59px;
  color: ${c.blue};
  font-size: 10px;
  font-weight: 700;
  line-height: 12px;
  small { display: block; color: ${c.deepBlue}; font-size: 6px; line-height: 9px; }
`;
const SearchSlot = styled.div`
  display: flex;
  width: 200px;
  margin-right: 6px;
`;
const rowColumns = css`
  display: grid;
  grid-template-columns: 176px 84px 1fr;
  align-items: center;
  padding-left: 2px;
`;
const HeadRow = styled.div`
  ${rowColumns}
  height: 13px;
  border-top: 1px solid #000;
  border-bottom: 1px solid #000;
  font-size: 6px;
`;
const Slots = styled.div`
  display: flex;
  align-items: center;
`;
const Slot = styled.span<{ $dark?: boolean }>`
  flex: none;
  display: flex;
  align-items: center;
  justify-content: center;
  width: 10px;
  height: 9px;
  ${(p) => p.$dark && css`background: #060606; border: solid #1b1b1b; border-width: 0 1px;`}
`;
const HeadText = styled.span<{ $pad: number }>`padding-left: ${(p) => p.$pad}px;`;

const Ruler = styled.div`
  display: flex;
  flex-direction: column;
  padding: 7px 16px 0 4px;
`;
const Navigator = styled.div`
  height: 6px;
  margin: 0 -2px 1px -4px;
  border-left: 5px solid #4a90e2;
  border-radius: 3px 0 0 3px;
  background: #666;
`;
const Ticks = styled.div`
  display: grid;
  grid-template-columns: repeat(16, 1fr);
  height: 12px;
`;
const Tick = styled.div`
  border-left: 1px solid;
  border-image: linear-gradient(transparent 75%, #888 75%) 1;
  span {
    display: flex;
    justify-content: center;
    width: 0;
    line-height: 9px;
  }
`;
const WorkArea = styled.div`
  width: 13%;
  height: 11px;
  background: #585858;
  margin: 0 0 1px;
  box-shadow: -4px 0 #4a90e2, 3px 0 #4a90e2;
`;
const CacheBar = styled.div`
  height: 2px;
  background: #25a52c;
`;

const Stage = styled.div`
  display: grid;
  grid-template: 164px / 357px 1fr 12px;
  align-items: end;
  overflow: hidden;
`;
const RowList = styled.div`
  display: grid;
  grid-template-rows: repeat(15, 1fr);
  height: 170px;
`;
const LayerRow = styled.div<{ $kind: "layer" | "prop" | "selected" }>`
  ${rowColumns}
  min-height: 0;
  border-bottom: 1px solid #050505;
  border-right: 1px solid #000;
  background: ${(p) => (p.$kind === "layer" ? "#242424" : p.$kind === "selected" ? "#4a4a4a" : c.panel)};
`;
const NameCell = styled.div<{ $indent: number }>`
  flex: 1;
  display: flex;
  align-items: center;
  gap: 2px;
  padding-left: ${(p) => p.$indent}px;
  margin-right: 4px;
`;
const Num = styled.span`
  width: 21px;
  padding-left: 4px;
`;
const Name = styled.span<{ $mode?: "hot" | "framed" }>`
  padding: 0 2px;
  ${(p) => p.$mode === "hot" && css`flex: 1; background: #444;`}
  ${(p) => p.$mode === "framed" && css`flex: 1; border: 1px solid #bbb;`}
`;
const ParentCell = styled.div<{ $pad: number }>`
  display: flex;
  align-items: center;
  gap: 4px;
  padding-left: ${(p) => p.$pad}px;
`;
const Well = styled.button`
  width: 15px;
  height: 9px;
  margin-left: 3px;
  background: #000;
`;
const ColorWell = styled.button`
  width: 14px;
  height: 9px;
  background: #fff;
`;
const TrackArea = styled.div`
  position: relative;
  padding: 0 4px 0 4px;
  height: 164px;
  display: flex;
  align-items: flex-end;
  background: ${c.panel};
`;
const Tracks = styled(RowList)`
  position: relative;
  width: 100%;
  background: linear-gradient(90deg, #1e1e1e 13%, transparent 13%);
`;
const Track = styled.div<{ $bar?: string }>`
  position: relative;
  border-bottom: 1px solid #070707;
  background: ${(p) => p.$bar ?? "none"};
`;
const Mark = styled.span`
  position: absolute;
  top: 50%;
  transform: translate(-50%, -50%);
`;
const Playhead = styled.span`
  position: absolute;
  left: 4px;
  top: 0;
  bottom: 0;
  width: 1px;
  background: #78aee8;
`;
const PlayheadTop = styled.span`
  position: absolute;
  left: 0;
  top: 9px;
`;
const PreviewLine = styled.span`
  position: absolute;
  top: 0;
  bottom: 0;
  left: 8%;
  width: 1px;
  background: #c01818;
`;
const RulerWrap = styled.div`
  position: relative;
  margin-top: -1px;
`;
const ScrollTrack = styled.div`
  height: 164px;
  background: #424442;
`;
const Footer = styled.div`
  display: flex;
  align-items: center;
  height: 11px;
  border-top: 1px solid #000;
`;
const FooterLeft = styled.div`
  display: flex;
  align-items: center;
  width: 357px;
`;
const FootIcons = styled.div`
  display: flex;
  gap: 3px;
  width: 68px;
  padding-left: 1px;
  button { width: 10px; }
`;
const FootText = styled.span`
  width: 113px;
  em { font-style: normal; color: ${c.dim}; }
`;
const Range = styled.input`
  appearance: none;
  width: 40px;
  height: 8px;
  margin: 0 5px;
  background: linear-gradient(#555, #555) center / 100% 1px no-repeat;
  &::-webkit-slider-thumb {
    appearance: none;
    width: 7px;
    height: 7px;
    border: 2px solid #c8c8c8;
    border-radius: 50%;
    background: #111;
  }
`;

interface Prop {
  name: string;
  nav?: "both" | "left" | "off";
  twirl?: "open" | "closed";
  watch?: "on" | "off";
  indent: number;
  value?: string;
  unit?: string;
  select?: string;
  color?: boolean;
  hot?: boolean;
  link?: boolean;
  marks: [string, number][];
}

const props: Prop[] = [
  { name: "Transform", twirl: "closed", indent: 24, value: "Reset", marks: [["ibeam", 0]] },
  { name: "Light Options", twirl: "open", indent: 24, select: "Spot", marks: [["ibeam", 0]] },
  { name: "Intensity", watch: "off", indent: 35, value: "100", unit: "%", link: true, marks: [["ibeam", 0]] },
  { name: "Color", nav: "both", twirl: "closed", watch: "on", indent: 35, color: true, link: true, marks: [["kfR", 0], ["kf", 12.5]] },
  { name: "Cone Angle", nav: "both", watch: "on", indent: 35, value: "53.0°", link: true, marks: [["kfR", 0], ["kf", 12.5]] },
  { name: "Cone Feather", nav: "both", watch: "on", indent: 35, value: "50", unit: "%", link: true, marks: [["kfR", 0], ["kf", 12.5]] },
  { name: "Falloff", nav: "left", watch: "on", indent: 35, select: "Smooth", link: true, marks: [["hold", 0]] },
  { name: "Radius", nav: "both", watch: "on", indent: 35, value: "500.0", link: true, marks: [["kfR", 0], ["kf", 12.5]] },
  { name: "Falloff Distance", nav: "left", watch: "on", indent: 35, value: "515.0", link: true, marks: [["kf", 0]] },
  { name: "Casts Shadows", indent: 35, value: "On", link: true, marks: [] },
  { name: "Shadow Darkness", nav: "off", watch: "on", indent: 35, value: "35", unit: "%", hot: true, link: true, marks: [["kfR", 6.25], ["ring", 12.5]] },
  { name: "Shadow Diffusion", watch: "off", indent: 35, value: "0.0", unit: " pixels", link: true, marks: [["ibeam", 0]] },
];

const markSize: Record<string, number> = { ibeam: 7, hold: 7, ring: 11 };

function KeyNav({ mode, size = 7 }: { mode: "both" | "left" | "off"; size?: number }) {
  return (
    <>
      <Slot><Icon name="prev" size={size} color="#5c5c5c" /></Slot>
      <Slot>{mode === "off" ? <Icon name="keyOff" size={size} /> : <Icon name="key" size={size} color={c.blue} />}</Slot>
      <Slot><Icon name="next" size={size} color={mode === "left" ? "#5c5c5c" : "#c4c4c4"} /></Slot>
    </>
  );
}

const KeyCell = styled.div`
  display: flex;
  width: 30px;
`;
const Lead = styled.div`
  display: flex;
  align-items: center;
`;

function PropRow({ p }: { p: Prop }) {
  return (
    <LayerRow $kind="prop">
      <Lead>
        <KeyCell>{p.nav && <KeyNav mode={p.nav} />}</KeyCell>
        <NameCell $indent={p.indent}>
          <Slot>{p.twirl && <Icon name={p.twirl === "open" ? "chevron" : "twirl"} size={7} />}</Slot>
          {p.watch && <Slot><Icon name={p.watch === "on" ? "watchOn" : "watch"} size={9} color={p.watch === "on" ? c.blue : undefined} /></Slot>}
          {p.watch === "on" && <Slot><Icon name="graph" size={8} color="#8a8a8a" /></Slot>}
          <Name $mode={p.hot ? "hot" : undefined}>{p.name}</Name>
        </NameCell>
      </Lead>
      <Slots>
        {p.value && <Value>{p.value}</Value>}
        {p.unit && <Unit>{p.unit.startsWith(" ") ? <>&nbsp;{p.unit.trim()}</> : p.unit}</Unit>}
        {p.select && <Select label={p.name} value={p.select} width={86} />}
        {p.color && <><ColorWell aria-label="Light color" /><Well aria-label="Pick color"><Icon name="dropper" size={11} /></Well></>}
      </Slots>
      <ParentCell $pad={17}>{p.link && <Icon name="spiral" size={9} />}</ParentCell>
    </LayerRow>
  );
}

interface Layer {
  num: string;
  name: string;
  color: string;
  kind: "light" | "text" | "solid";
  locked?: boolean;
}

function LayerLine({ l }: { l: Layer }) {
  const light = l.kind === "light";
  return (
    <LayerRow $kind={light ? "selected" : "layer"}>
      <Lead>
        <Slot><FaEye size={8} /></Slot>
        <Slot />
        <Slot $dark />
        <Slot $dark>{l.locked && <MdLock size={8} />}</Slot>
        <NameCell $indent={2}>
          <Slot><Icon name={light ? "chevron" : "twirl"} size={7} /></Slot>
          <Swatch $color={l.color} $size={8} />
          <Num>{l.num}</Num>
          <Slot>
            {light && <Icon name="bulb" size={8} />}
            {l.kind === "text" && <Icon name="type" size={7} color="#8f8f8f" />}
            {l.kind === "solid" && <Swatch $color="#001f4a" $size={9} />}
          </Slot>
          <Name $mode={light ? "framed" : undefined}>{l.name}</Name>
        </NameCell>
      </Lead>
      <Slots>
        <Slot><Icon name="shy" size={8} /></Slot>
        <Slot $dark={l.kind === "solid"}>{l.kind === "text" && <Icon name="sun" size={8} color={c.dim} />}</Slot>
        <Slot>{!light && <Icon name="pencil" size={8} />}</Slot>
        <Slot /><Slot />
        <Slot $dark={!light} />
        <Slot $dark />
        <Slot $dark={!light}>{l.kind !== "solid" && <Icon name="cube" size={8} />}</Slot>
      </Slots>
      <ParentCell $pad={8}>
        <Icon name="spiral" size={9} />
        <Select label={`Parent of ${l.name}`} value="None" width={58} />
      </ParentCell>
    </LayerRow>
  );
}

const layers: Layer[] = [
  { num: "2", name: "Spot Light 1", color: c.peach, kind: "light" },
  { num: "3", name: "SPOT LIGHT", color: c.red, kind: "text" },
  { num: "4", name: "Deep Ro...Blue Solid 1", color: c.red, kind: "solid", locked: true },
];

const tickLabels = Array.from({ length: 14 }, (_, i) =>
  i === 0 ? "0:00f" : `0${Math.floor(i / 2)}:${i % 2 ? "15" : "00"}f`
);

function Timeline() {
  return (
    <TimelinePanel>
      <TimelineTab>
        <Icon name="close" size={5} />
        <Swatch $color={c.sand} />
        Comp 1
        <Icon name="menu" size={6} />
      </TimelineTab>
      <Columns>
        <HeadLeft>
          <HeadTools>
            <Timecode>0:00:00:00<small>00000 (30.00 fps)</small></Timecode>
            <SearchSlot><Search label="Search layers" /></SearchSlot>
            {["flow", "shyMan", "stack", "blur", "graphBox"].map((n) => (
              <IconButton key={n} aria-label={n}><Icon name={n} size={10} /></IconButton>
            ))}
          </HeadTools>
          <HeadRow>
            <Lead>
              <Slot><FaEye size={8} /></Slot>
              <Slot><Icon name="speaker" size={8} /></Slot>
              <Slot><Icon name="dot" size={8} /></Slot>
              <Slot><MdLock size={8} /></Slot>
              <HeadText $pad={11}><MdLocalOffer size={8} /></HeadText>
              <HeadText $pad={10}>#</HeadText>
              <HeadText $pad={16}>Source Name</HeadText>
            </Lead>
            <Slots>
              {["shy", "sun", "slash"].map((n) => <Slot key={n}><Icon name={n} size={8} /></Slot>)}
              <Slot><i>fx</i></Slot>
              {["frames", "blur", "half", "cube"].map((n) => <Slot key={n}><Icon name={n} size={8} /></Slot>)}
            </Slots>
            <HeadText $pad={9}>Parent &amp; Link</HeadText>
          </HeadRow>
        </HeadLeft>
        <RulerWrap>
          <Ruler>
            <Navigator />
            <Ticks>
              {tickLabels.map((t) => <Tick key={t}><span>{t}</span></Tick>)}
            </Ticks>
            <WorkArea />
            <CacheBar />
          </Ruler>
          <PlayheadTop>
            <svg width="10" height="32" viewBox="0 0 10 32"><path d="M1 5h8v4l-4 4-4-4z" fill="#4a90e2" /><path d="M4.500 10v22" stroke="#78aee8" /></svg>
          </PlayheadTop>
        </RulerWrap>
      </Columns>
      <Stage>
        <RowList>
          <LayerLine l={layers[0]} />
          {props.map((p) => <PropRow key={p.name} p={p} />)}
          <LayerLine l={layers[1]} />
          <LayerLine l={layers[2]} />
        </RowList>
        <TrackArea>
          <Tracks>
            <Track $bar="#dcae80" />
            {props.map((p) => (
              <Track key={p.name}>
                {p.marks.map(([kind, at]) => (
                  <Mark key={at} style={{ left: `${at}%` }}>
                    <Icon name={kind} size={markSize[kind] ?? 6} />
                  </Mark>
                ))}
              </Track>
            ))}
            <Track $bar="#6e2c2e" />
            <Track $bar="#6e2c2e" />
            <PreviewLine />
          </Tracks>
          <Playhead />
        </TrackArea>
        <ScrollTrack />
      </Stage>
      <Footer>
        <FooterLeft>
          <FootIcons>
            <button aria-label="Layer switches"><Icon name="toggleA" size={8} /></button>
            <button aria-label="Transfer controls"><Icon name="toggleB" size={8} /></button>
            <button aria-label="In and out"><Icon name="braces" size={8} /></button>
            <button aria-label="Render time"><Icon name="render" size={8} /></button>
          </FootIcons>
          <FootText>Frame Render Time: <em>2ms</em></FootText>
          <button>Toggle Switches / Modes</button>
        </FooterLeft>
        <Icon name="hill" size={8} />
        <Range type="range" min={0} max={100} defaultValue={4} aria-label="Timeline zoom" />
        <Icon name="hills" size={11} />
      </Footer>
    </TimelinePanel>
  );
}

/* ---------- right column ---------- */

const Side = styled.aside`
  width: 205px;
  display: flex;
  flex-direction: column;
  gap: 2px;
`;
const SideTitle = styled.h2`
  display: flex;
  align-items: center;
  gap: 7px;
  height: 16px;
  margin: 0;
  padding: 0 12px 0 7px;
  font-size: 7px;
  font-weight: 500;
  color: #d5d5d5;
`;
const Transport = styled.div`
  display: flex;
  padding: 3px 0 5px 27px;
  button { width: 16px; height: 11px; }
`;
const Properties = styled(Panel)`flex: 1;`;
const GroupHead = styled.div`
  display: grid;
  grid-template-columns: 94px 1fr;
  align-items: center;
  justify-items: start;
  height: 13px;
  padding-left: 7px;
  font-weight: 500;
  color: #cfcfcf;
`;
const TransformGrid = styled.div`
  display: grid;
  grid-template-rows: repeat(6, 1fr);
  height: 81px;
  margin-bottom: 3px;
`;
const LightGrid = styled.div`
  display: grid;
  grid-template-rows: repeat(8, 4fr) 5fr repeat(2, 4fr);
  height: 150px;
  margin: 4px 0 10px;
`;
const PropLine = styled.div`
  display: grid;
  grid-template-columns: 26px 61px 1fr;
  align-items: center;
  padding-left: 6px;
  min-height: 0;
`;
const NavCell = styled.div`
  display: flex;
  justify-content: center;
  span { width: 9px; }
`;
const LabelCell = styled.label`
  padding-left: 7px;
`;
const ValueCell = styled.div`
  display: flex;
  align-items: center;
  gap: 7px;
  padding-left: 7px;
`;
const Field = styled.button<{ $wide?: boolean }>`
  justify-content: flex-start;
  width: ${(p) => (p.$wide ? 34 : 26)}px;
  height: 12px;
  padding-left: 1px;
  border-bottom: 1px solid #6a6a6a;
  color: ${c.blue};
  font-weight: 500;
`;
const Rule = styled.hr`
  width: calc(100% - 22px);
  height: 1px;
  margin: 0 0 4px 7px;
  border: 0;
  background: #000;
`;
const ColorChip = styled.button`
  width: 11px;
  height: 11px;
  background: #fff;
`;
const Collapsed = styled.div<{ $h: number }>`
  display: flex;
  justify-content: flex-end;
  height: ${(p) => p.$h}px;
  padding: 7px 12px 0 0;
  border-top: 1px solid #050505;
`;

const transforms: [string, string[]][] = [
  ["Point of Interest", ["860.6", "846.3", "-196.3"]],
  ["Position", ["1119.1", "369", "-863"]],
  ["Orientation", ["352.2°", "352.8°", "162.9°"]],
  ["X Rotation", ["0x+0°"]],
  ["Y Rotation", ["0x+0°"]],
  ["Z Rotation", ["0x+0°"]],
];

interface LightProp { name: string; nav?: "both" | "left" | "off"; watch?: boolean; value?: string; unit?: string; kind?: "select" | "color" | "check" }
const lights: LightProp[] = [
  { name: "Light Type", kind: "select", value: "Spot" },
  { name: "Intensity", watch: true, value: "100", unit: "%" },
  { name: "Color", nav: "both", kind: "color" },
  { name: "Cone Angle", nav: "both", value: "53", unit: "°" },
  { name: "Cone Feather", nav: "both", value: "50", unit: "%" },
  { name: "Falloff", nav: "left", kind: "select", value: "Smooth" },
  { name: "Radius", nav: "both", value: "500" },
  { name: "Falloff Distance", nav: "left", value: "515" },
  { name: "Casts Shadows", kind: "check" },
  { name: "Shadow Darkn...", nav: "off", value: "35", unit: "%" },
  { name: "Shadow Diffusi...", watch: true, value: "0", unit: "px" },
];

function Sidebar() {
  return (
    <Side>
      <Panel>
        <SideTitle>Preview<Icon name="block" size={6} /></SideTitle>
        <Transport>
          {["first", "stepBack", "stop", "stepFwd", "last"].map((n) => (
            <button key={n} aria-label={n}><Icon name={n} size={8} /></button>
          ))}
        </Transport>
      </Panel>
      <Properties>
        <SideTitle>Properties: Spot Light 1<Spacer /><Icon name="menu" size={6} /></SideTitle>
        <GroupHead>Layer Transform<Value>Reset</Value></GroupHead>
        <TransformGrid>
          {transforms.map(([name, vals]) => (
            <PropLine key={name}>
              <NavCell><Icon name="watch" size={9} /></NavCell>
              <LabelCell>{name}</LabelCell>
              <ValueCell>
                {vals.map((v) => <Field key={v} $wide={vals.length === 1}>{v}</Field>)}
              </ValueCell>
            </PropLine>
          ))}
        </TransformGrid>
        <Rule />
        <GroupHead>Light Options</GroupHead>
        <LightGrid>
          {lights.map((l) => (
            <PropLine key={l.name}>
              <NavCell>
                {l.watch && <Icon name="watch" size={9} />}
                {l.nav && <KeyNav mode={l.nav} size={6} />}
              </NavCell>
              <LabelCell htmlFor={l.kind === "check" ? "casts" : undefined}>{l.name}</LabelCell>
              <ValueCell>
                {l.kind === "select" && <Select label={l.name} value={l.value!} width={97} height={12} />}
                {l.kind === "color" && <><ColorChip aria-label="Color" /><FaEyeDropper size={9} /></>}
                {l.kind === "check" && <Check id="casts" type="checkbox" defaultChecked />}
                {!l.kind && <Field>{l.value}{l.unit && <Unit>{l.unit === "px" ? <>&nbsp;px</> : l.unit}</Unit>}</Field>}
              </ValueCell>
            </PropLine>
          ))}
        </LightGrid>
        <Collapsed $h={126}><Icon name="menu" size={6} /></Collapsed>
        <Collapsed $h={17} />
        <Collapsed $h={17} />
        <Collapsed $h={17} />
      </Properties>
    </Side>
  );
}

/* ---------- lesson caption over the workspace ---------- */

const Caption = styled.div`
  position: absolute;
  right: 75px;
  top: 382px;
  width: 275px;
  display: flex;
  flex-direction: column;
  align-items: center;
`;
const Card = styled.div`
  display: flex;
  flex-direction: column;
  align-items: center;
  gap: 16px;
  width: 100%;
  height: 193px;
  padding: 15px 0 0 8px;
  background: #000;
  color: #9999ff;
  font-family: "Noto Sans", sans-serif;
  font-weight: 600;
  font-size: 41px;
  font-variant-ligatures: none;
  line-height: 50px;
`;
const Logo = styled.div`
  display: flex;
  align-items: center;
  justify-content: center;
  width: 114px;
  height: 110px;
  padding-bottom: 10px;
  border-radius: 18px;
  background: #00005b;
  font: 700 68px/90px ${ui};
`;
const Lesson = styled.div`
  color: #fff;
  margin-top: 13px;
  font: 400 28px/36px Lato, sans-serif;
`;
const Pointer = styled.svg`
  position: absolute;
  left: 295px;
  top: 560px;
`;

export default function App() {
  return (
    <Page>
      <GlobalStyle />
      <TitleBar>
        <AppBadge>Ae</AppBadge>
        Adobe After Effects 2025 - Untitled Project.aep *
        <WindowButtons>
          <button aria-label="Minimize"><Icon name="min" size={7} /></button>
          <button aria-label="Restore"><Icon name="restore" size={7} /></button>
          <button aria-label="Close"><Icon name="x" size={7} /></button>
        </WindowButtons>
      </TitleBar>
      <MenuBar>
        {["File", "Edit", "Composition", "Layer", "Effect", "Animation", "View", "Window", "Help"].map((m) => (
          <button key={m}>{m}</button>
        ))}
      </MenuBar>
      <Toolbar />
      <Body>
        <Main>
          <Upper>
            <ProjectPanel />
            <CompositionPanel />
          </Upper>
          <Timeline />
        </Main>
        <Sidebar />
      </Body>
      <Caption>
        <Card><Logo>Ae</Logo>After Effects</Card>
        <Lesson>43. Spot Light</Lesson>
      </Caption>
      <Pointer width="9" height="13" viewBox="0 0 9 13"><path d="M1 1v10l2.500-2.200L5 12l2-1-1.500-3H8.500z" fill="#fff" stroke="#222" strokeWidth=".6" /></Pointer>
    </Page>
  );
}
